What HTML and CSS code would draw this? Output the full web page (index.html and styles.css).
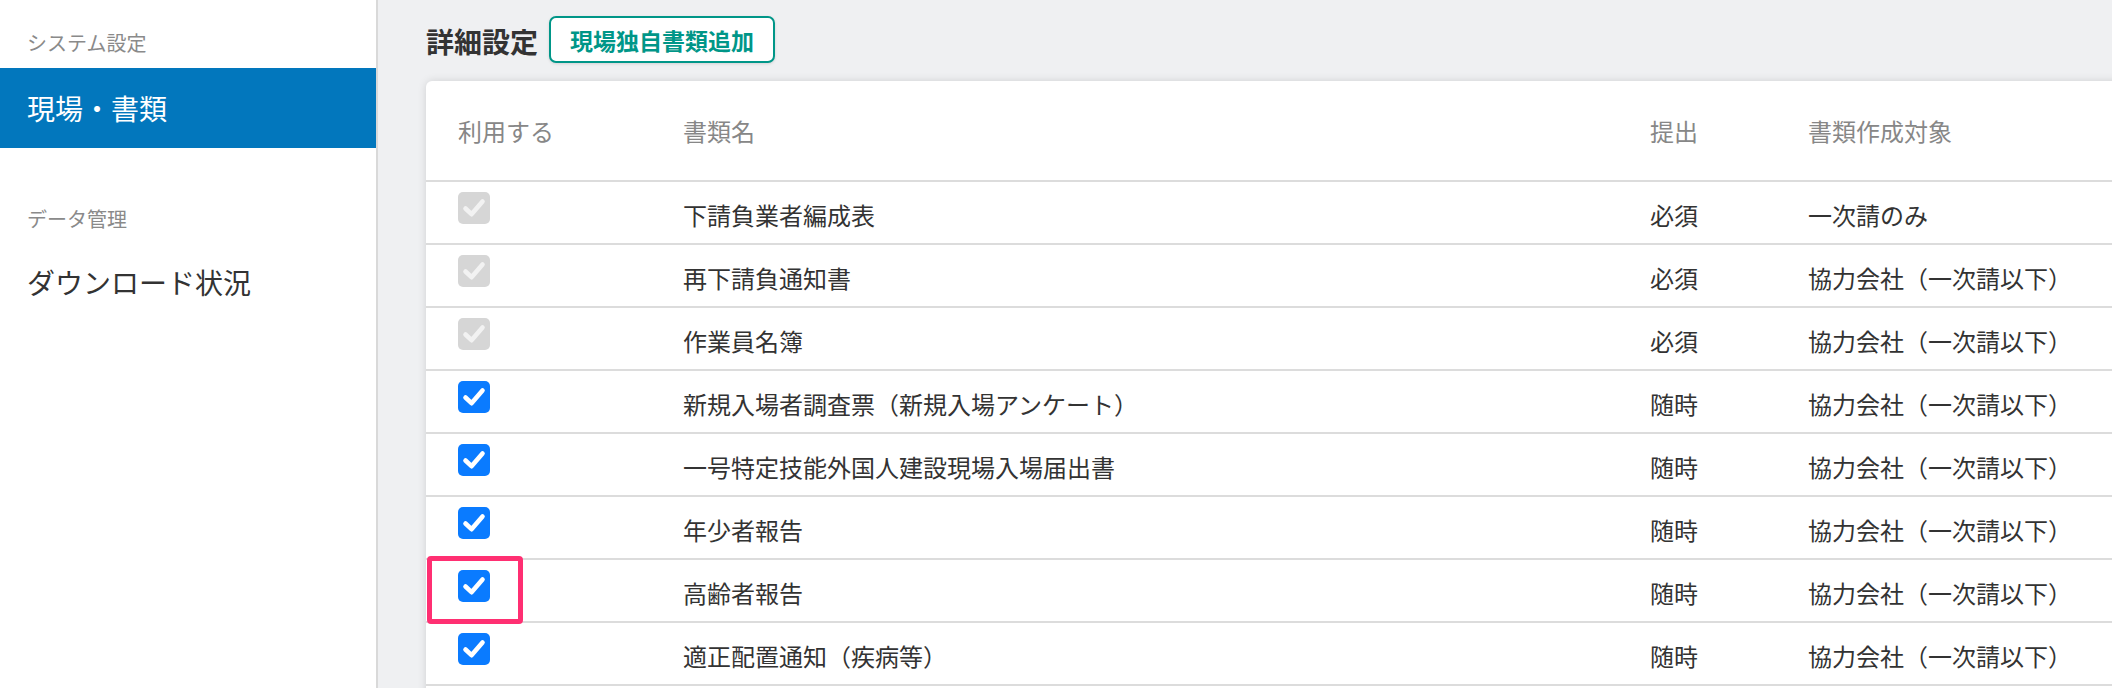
FILE: index.html
```html
<!DOCTYPE html>
<html lang="ja">
<head>
<meta charset="utf-8">
<title>詳細設定</title>
<link rel="stylesheet" href="styles.css">
</head>
<body>
<div class="app">
  <aside class="sidebar">
    <div class="side-label">システム設定</div>
    <div class="side-item active">現場・書類</div>
    <div class="side-label second">データ管理</div>
    <div class="side-item">ダウンロード状況</div>
  </aside>
  <main class="main">
    <div class="page-head">
      <h1 class="title">詳細設定</h1>
      <button class="add-btn">現場独自書類追加</button>
    </div>
    <section class="card">
      <div class="row head">
        <div class="c1">利用する</div>
        <div class="c2">書類名</div>
        <div class="c3">提出</div>
        <div class="c4">書類作成対象</div>
      </div>

      <div class="row">
        <div class="c1"><span class="cb disabled"><svg viewBox="0 0 32 32"><path d="M7.5 16.5 L13.5 22.2 L24.5 9.5"/></svg></span></div>
        <div class="c2">下請負業者編成表</div>
        <div class="c3">必須</div>
        <div class="c4">一次請のみ</div>
      </div>
      <div class="row">
        <div class="c1"><span class="cb disabled"><svg viewBox="0 0 32 32"><path d="M7.5 16.5 L13.5 22.2 L24.5 9.5"/></svg></span></div>
        <div class="c2">再下請負通知書</div>
        <div class="c3">必須</div>
        <div class="c4">協力会社（一次請以下）</div>
      </div>
      <div class="row">
        <div class="c1"><span class="cb disabled"><svg viewBox="0 0 32 32"><path d="M7.5 16.5 L13.5 22.2 L24.5 9.5"/></svg></span></div>
        <div class="c2">作業員名簿</div>
        <div class="c3">必須</div>
        <div class="c4">協力会社（一次請以下）</div>
      </div>
      <div class="row">
        <div class="c1"><span class="cb"><svg viewBox="0 0 32 32"><path d="M7.5 16.5 L13.5 22.2 L24.5 9.5"/></svg></span></div>
        <div class="c2">新規入場者調査票（新規入場アンケート）</div>
        <div class="c3">随時</div>
        <div class="c4">協力会社（一次請以下）</div>
      </div>
      <div class="row">
        <div class="c1"><span class="cb"><svg viewBox="0 0 32 32"><path d="M7.5 16.5 L13.5 22.2 L24.5 9.5"/></svg></span></div>
        <div class="c2">一号特定技能外国人建設現場入場届出書</div>
        <div class="c3">随時</div>
        <div class="c4">協力会社（一次請以下）</div>
      </div>
      <div class="row">
        <div class="c1"><span class="cb"><svg viewBox="0 0 32 32"><path d="M7.5 16.5 L13.5 22.2 L24.5 9.5"/></svg></span></div>
        <div class="c2">年少者報告</div>
        <div class="c3">随時</div>
        <div class="c4">協力会社（一次請以下）</div>
      </div>
      <div class="row">
        <div class="c1 marked"><span class="cb"><svg viewBox="0 0 32 32"><path d="M7.5 16.5 L13.5 22.2 L24.5 9.5"/></svg></span><span class="highlight"></span></div>
        <div class="c2">高齢者報告</div>
        <div class="c3">随時</div>
        <div class="c4">協力会社（一次請以下）</div>
      </div>
      <div class="row">
        <div class="c1"><span class="cb"><svg viewBox="0 0 32 32"><path d="M7.5 16.5 L13.5 22.2 L24.5 9.5"/></svg></span></div>
        <div class="c2">適正配置通知（疾病等）</div>
        <div class="c3">随時</div>
        <div class="c4">協力会社（一次請以下）</div>
      </div>
      <div class="row">
        <div class="c1"><span class="cb"><svg viewBox="0 0 32 32"><path d="M7.5 16.5 L13.5 22.2 L24.5 9.5"/></svg></span></div>
        <div class="c2">&nbsp;</div>
        <div class="c3">&nbsp;</div>
        <div class="c4">&nbsp;</div>
      </div>
    </section>
  </main>
</div>
</body>
</html>
```

FILE: styles.css
```css
html, body {
  margin: 0;
  padding: 0;
  height: 100%;
  overflow: hidden;
}

body {
  font-family: "Noto Sans CJK JP", "Noto Sans", sans-serif;
  color: #333;
  background: #eff0f2;
}

.app {
  display: flex;
  height: 100%;
}

.sidebar {
  width: 376px;
  flex: none;
  background: #fff;
  border-right: 2px solid #d9d9d9;
  padding-top: 27px;
  box-sizing: content-box;
}

.side-label {
  font-size: 20px;
  line-height: 32px;
  color: #8a8a8a;
  padding-left: 27px;
  height: 41px;
}

.side-label.second {
  margin-top: 55px;
  height: 39px;
}

.side-item {
  height: 80px;
  display: flex;
  align-items: center;
  padding-left: 27px;
  font-size: 28px;
  color: #333;
}

.side-item.active {
  background: #0277bd;
  color: #fff;
}

.main {
  flex: 1;
  min-width: 0;
  overflow: hidden;
  padding-left: 48px;
  padding-top: 16px;
}

.page-head {
  display: flex;
  align-items: center;
  gap: 11px;
  height: 47px;
}

.title {
  margin: 0;
  font-size: 28px;
  font-weight: 700;
  color: #333;
  line-height: 1;
  padding-top: 2px;
}

.add-btn {
  height: 47px;
  width: 226px;
  box-sizing: border-box;
  border: 2px solid #009688;
  border-radius: 7px;
  background: #fff;
  color: #009688;
  font-family: inherit;
  font-size: 23px;
  font-weight: 700;
  padding: 0 16px;
  box-shadow: 0 1px 3px rgba(0, 0, 0, 0.12);
}

.card {
  margin-top: 18px;
  width: 1760px;
  background: #fff;
  border-radius: 6px 0 0 0;
  box-shadow: 0 0 8px rgba(0, 0, 0, 0.13);
}

.row {
  display: grid;
  grid-template-columns: 257px 967px 158px 1fr;
  align-items: center;
  min-height: 61px;
  border-bottom: 2px solid #dcdcdc;
  font-size: 24px;
  color: #333;
}

.row > div {
  line-height: 34px;
}

.row.head {
  height: 99px;
  color: #878787;
}

.c1 {
  padding-left: 32px;
  align-self: start;
  padding-top: 10px;
  height: 32px;
  position: relative;
}

.row.head .c1 {
  align-self: center;
  padding-top: 0;
  height: auto;
}

.c2, .c3, .c4 {
  padding-top: 4px;
}

.row.head .c2, .row.head .c3, .row.head .c4 {
  padding-top: 0;
}

.cb {
  display: block;
  width: 32px;
  height: 32px;
  border-radius: 5px;
  background: #0a7bff;
}

.cb svg {
  display: block;
  width: 32px;
  height: 32px;
}

.cb path {
  fill: none;
  stroke: #fff;
  stroke-width: 4.6;
  stroke-linecap: round;
  stroke-linejoin: round;
}

.cb.disabled {
  background: #d6d6d6;
}

.cb.disabled path {
  stroke: #f2f2f2;
}

.highlight {
  position: absolute;
  left: 1px;
  top: -4px;
  width: 96px;
  height: 68px;
  box-sizing: border-box;
  border: 5px solid #ff2f72;
  border-radius: 4px;
}
```
